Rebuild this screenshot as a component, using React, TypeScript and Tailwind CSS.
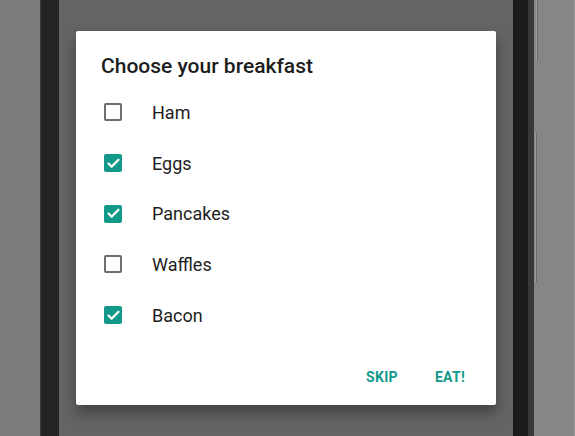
import { Check } from 'lucide-react';

const items = [
  { label: 'Ham', checked: false },
  { label: 'Eggs', checked: true },
  { label: 'Pancakes', checked: true },
  { label: 'Waffles', checked: false },
  { label: 'Bacon', checked: true },
];

function Box({ checked }: { checked: boolean }) {
  if (checked) {
    return (
      <div className="w-[18px] h-[18px] rounded-[2px] bg-[#13998a] flex items-center justify-center">
        <Check className="w-[15px] h-[15px] text-white" strokeWidth={3.5} />
      </div>
    );
  }
  return <div className="w-[18px] h-[18px] rounded-[2px] border-2 border-[#6e6e6e]" />;
}

export default function App() {
  return (
    <div className="w-[575px] h-[436px] flex overflow-hidden bg-[#7b7b7b] font-['Roboto',sans-serif]">
      {/* left side of the device */}
      <div className="w-[40px] bg-[#7b7b7b]" />
      <div className="w-[19px] bg-[#242424] border-l border-[#3a3a3a]" />

      {/* dimmed screen */}
      <div className="w-[454px] bg-[#646464] pt-[31px] px-[17px]">
        <div className="h-[374px] bg-white rounded-[2px] shadow-[0_8px_14px_rgba(0,0,0,0.35)] flex flex-col">
          <h1 className="pl-[25px] pt-[23px] text-[21px] leading-[24px] font-medium text-[#1d1d1d]">
            Choose your breakfast
          </h1>
          <div className="mt-[9px] pl-[28px]">
            {items.map((item) => (
              <div key={item.label} className="h-[50.7px] flex items-center">
                <Box checked={item.checked} />
                <span className="ml-[30px] text-[18px] text-[#1d1d1d]">{item.label}</span>
              </div>
            ))}
          </div>
          <div className="mt-auto mb-[17px] flex justify-end pr-[31px] gap-[37px] text-[14px] font-bold tracking-[0.3px] text-[#13998a]">
            <span>SKIP</span>
            <span>EAT!</span>
          </div>
        </div>
      </div>

      {/* right side of the device */}
      <div className="w-[15px] bg-[#1c1c1c]" />
      <div className="w-[6px] bg-[#383838]" />
      <div className="relative flex-1 bg-[#868686] border-r border-[#9a9a9a]">
        <div className="absolute left-[2px] top-0 h-[61px] w-[2px] bg-[#9c9c9c] border-r border-[#6a6a6a]" />
        <div className="absolute left-[1px] top-[133px] h-[149px] w-[2px] bg-[#9c9c9c] border-r border-[#6a6a6a]" />
      </div>
    </div>
  );
}
